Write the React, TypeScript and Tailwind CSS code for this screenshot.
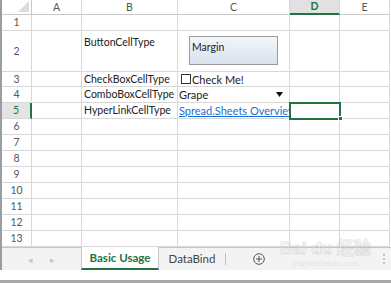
import React from 'react';

const grid = 'border-r border-b border-[#d8d8d8]';

const RowHead: React.FC<{ n: number; active?: boolean }> = ({ n, active }) => (
    <div
        className={
            active
                ? 'w-[30px] shrink-0 flex items-center justify-center border-b border-[#d8d8d8] border-r-2 border-r-[#217346] bg-[#e4e4e4] text-[#217346]'
                : 'w-[30px] shrink-0 flex items-center justify-center border-r border-b border-[#d8d8d8] text-[#555]'
        }
    >
        {n}
    </div>
);

const EmptyRow: React.FC<{ n: number }> = ({ n }) => (
    <div className="flex h-[16px]">
        <RowHead n={n} />
        <div className={`w-[50px] ${grid}`} />
        <div className={`w-[96px] ${grid}`} />
        <div className={`w-[112px] ${grid}`} />
        <div className={`w-[50px] ${grid}`} />
        <div className={`w-[50px] ${grid}`} />
    </div>
);

export default function App() {
    return (
        <div className="relative w-[391px] h-[284px] overflow-hidden bg-white font-['Lato','Liberation_Sans',sans-serif] text-[10.5px] leading-none text-[#222]">
            <div className="w-[391px] border-l-2 border-[#9c9c9c]">
                {/* column headers */}
                <div className="flex h-[15px] text-[#555]">
                    <div className="relative w-[30px] border-r border-b border-[#c8c8c8]">
                        <svg className="absolute right-[2px] bottom-[2px]" width="11" height="11" viewBox="0 0 11 11">
                            <polygon points="11,0 11,11 0,11" fill="#dcdcdc" />
                        </svg>
                    </div>
                    <div className="w-[50px] flex items-center justify-center border-r border-b border-[#d8d8d8] border-b-[#c8c8c8]">A</div>
                    <div className="w-[96px] flex items-center justify-center border-r border-b border-[#d8d8d8] border-b-[#c8c8c8]">B</div>
                    <div className="w-[112px] flex items-center justify-center border-r border-b border-[#d8d8d8] border-b-[#c8c8c8]">C</div>
                    <div className="w-[50px] flex items-center justify-center border-r border-[#d8d8d8] border-b-2 border-b-[#217346] bg-[#e1e1e1] font-bold text-[#217346]">D</div>
                    <div className="w-[50px] flex items-center justify-center border-r border-b border-[#d8d8d8] border-b-[#c8c8c8]">E</div>
                </div>

                <EmptyRow n={1} />

                {/* row 2: button */}
                <div className="flex h-[41px]">
                    <RowHead n={2} />
                    <div className={`w-[50px] ${grid}`} />
                    <div className={`w-[96px] ${grid} pl-[2px] pt-[6px]`}>ButtonCellType</div>
                    <div className={`w-[112px] ${grid} pl-[11px] pt-[5px]`}>
                        <div className="w-[89px] h-[29px] border border-[#9a9a9a] bg-gradient-to-b from-[#f3f5f9] to-[#d9e2ef] pl-[2px] pt-[5px]">
                            Margin
                        </div>
                    </div>
                    <div className={`w-[50px] ${grid}`} />
                    <div className={`w-[50px] ${grid}`} />
                </div>

                {/* row 3: checkbox */}
                <div className="flex h-[15px]">
                    <RowHead n={3} />
                    <div className={`w-[50px] ${grid}`} />
                    <div className={`w-[96px] ${grid} pl-[2px] flex items-center`}>CheckBoxCellType</div>
                    <div className={`w-[112px] ${grid} pl-[3px] flex items-center gap-[1px]`}>
                        <div className="w-[10px] h-[10px] border border-[#333] bg-white" />
                        <span className="text-[11px]">Check Me!</span>
                    </div>
                    <div className={`w-[50px] ${grid}`} />
                    <div className={`w-[50px] ${grid}`} />
                </div>

                {/* row 4: combobox */}
                <div className="flex h-[16px]">
                    <RowHead n={4} />
                    <div className={`w-[50px] ${grid}`} />
                    <div className={`w-[96px] ${grid} pl-[2px] flex items-center whitespace-nowrap`}>ComboBoxCellType</div>
                    <div className={`w-[112px] ${grid} pl-[1px] pr-[6px] flex items-center justify-between`}>
                        <span className="text-[11px]">Grape</span>
                        <svg width="7" height="5" viewBox="0 0 7 5">
                            <polygon points="0,0 7,0 3.5,5" fill="#111" />
                        </svg>
                    </div>
                    <div className={`w-[50px] ${grid}`} />
                    <div className={`w-[50px] ${grid}`} />
                </div>

                {/* row 5: hyperlink */}
                <div className="flex h-[16px]">
                    <RowHead n={5} active />
                    <div className={`w-[50px] ${grid}`} />
                    <div className={`w-[96px] ${grid} pl-[2px] flex items-center whitespace-nowrap`}>HyperLinkCellType</div>
                    <div className={`w-[112px] ${grid} pl-[1px] flex items-center overflow-hidden whitespace-nowrap`}>
                        <span className="text-[11px] text-[#1c6fd1] underline underline-offset-[1px]">Spread.Sheets Overview</span>
                    </div>
                    <div className={`w-[50px] ${grid}`} />
                    <div className={`w-[50px] ${grid}`} />
                </div>

                {[6, 7, 8, 9, 10, 11, 12, 13].map(n => (
                    <EmptyRow key={n} n={n} />
                ))}

                {/* sheet tab bar */}
                <div className="flex h-[23px] items-stretch bg-[#f3f3f3] border-t border-[#c6c6c6] text-[#444]">
                    <div className="w-[79px] flex items-center justify-center gap-[17px] text-[#c4c4c4] text-[9px]">
                        <span>◂</span>
                        <span>▸</span>
                    </div>
                    <div className="w-[78px] -mt-px flex items-center justify-center bg-white border-x border-[#c6c6c6] border-b-2 border-b-[#217346] font-bold text-[#217346] text-[11.5px]">
                        Basic Usage
                    </div>
                    <div className="w-[66px] flex items-center justify-center text-[11.5px]">DataBind</div>
                    <div className="w-px my-[5px] bg-[#bdbdbd]" />
                    <div className="w-[66px] flex items-center justify-center">
                        <svg width="12" height="12" viewBox="0 0 12 12" fill="none" stroke="#555" strokeWidth="1">
                            <circle cx="6" cy="6" r="5.3" />
                            <path d="M6 3v6M3 6h6" />
                        </svg>
                    </div>
                    <div className="flex-1 flex items-center justify-end pr-[6px]">
                        <div className="flex flex-col gap-[2px]">
                            <div className="w-[2px] h-[2px] bg-[#c4c4c4]" />
                            <div className="w-[2px] h-[2px] bg-[#c4c4c4]" />
                            <div className="w-[2px] h-[2px] bg-[#c4c4c4]" />
                        </div>
                    </div>
                </div>
            </div>

            <div className="h-[10px]" />
            <div className="border-t-[3px] border-[#a8a8a8]" />

            {/* active cell D5 */}
            <div className="absolute left-[289px] top-[102px] w-[52px] h-[18px] border-2 border-[#217346]" />
            <div className="absolute left-[338px] top-[116px] w-[5px] h-[5px] bg-[#217346] border border-white" />

            {/* watermark */}
            <div className="absolute left-[280px] top-[240px] flex flex-col items-center gap-[2px] opacity-35 pointer-events-none">
                <span className="text-[17px] leading-none font-bold text-white [-webkit-text-stroke:1px_#b8b8b8] font-['Liberation_Sans','Noto_Sans_CJK_SC',sans-serif]">Bai du 经验</span>
                <span className="text-[9px] leading-none text-[#c8c8c8] font-['Liberation_Serif',serif]">jingyan.baidu.com</span>
            </div>
        </div>
    );
}
